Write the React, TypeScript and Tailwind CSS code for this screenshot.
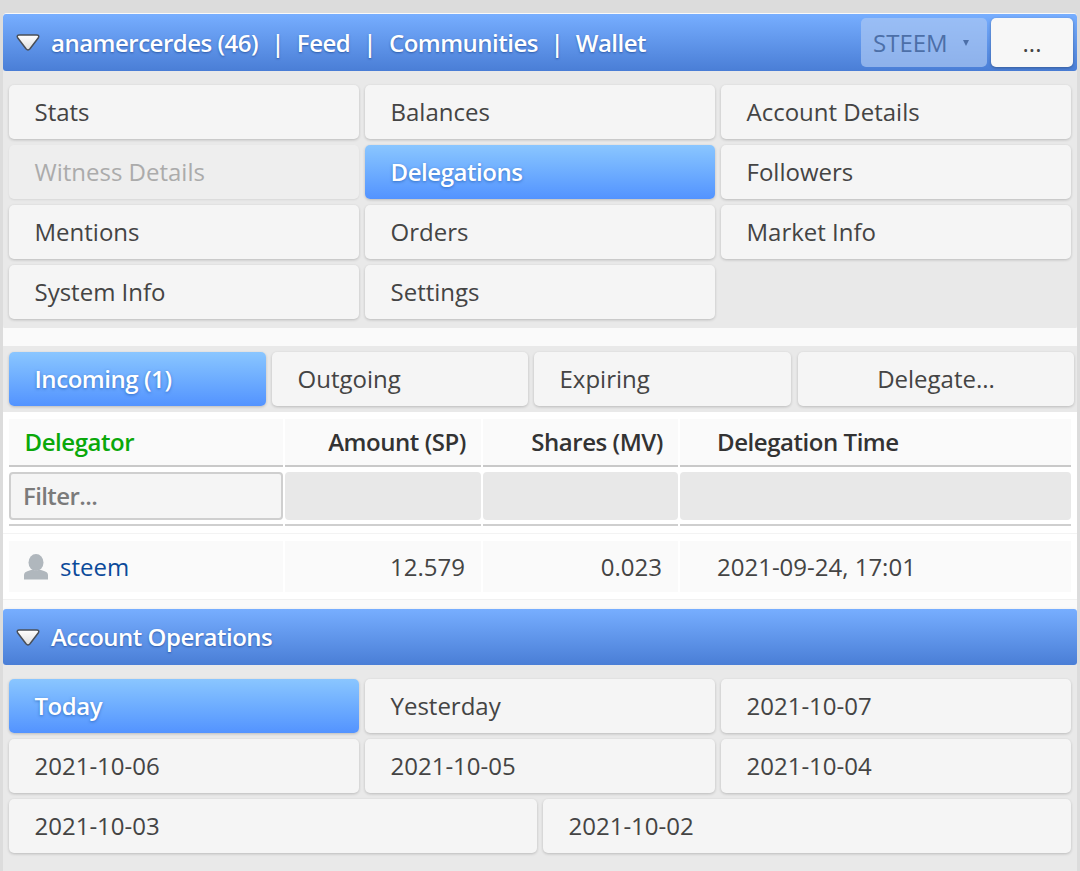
const font = "font-['Open_Sans','Liberation_Sans',sans-serif]";

const menu = ["Stats", "Balances", "Account Details", "Witness Details", "Delegations", "Followers", "Mentions", "Orders", "Market Info", "System Info", "Settings"];
const days = ["Today", "Yesterday", "2021-10-07", "2021-10-06", "2021-10-05", "2021-10-04"];

function Btn({ label, active, disabled, center, className = "" }: { label: string; active?: boolean; disabled?: boolean; center?: boolean; className?: string }) {
  let look = "bg-[#f5f5f5] text-[#444] shadow-[0_1px_3px_rgba(0,0,0,0.2)]";
  if (active) look = "bg-gradient-to-b from-[#8ac6ff] to-[#5393ff] text-white font-semibold tracking-[-0.45px] [text-shadow:0_1px_3px_rgba(0,60,140,0.5)] shadow-[0_1px_3px_rgba(0,0,0,0.2)]";
  if (disabled) look = "bg-[#eeeeee] text-[#ababab] shadow-[0_1px_2px_rgba(0,0,0,0.08)]";
  return (
    <div className={`flex h-[54px] items-center rounded-[5px] px-[25.5px] text-[24px] leading-none ${center ? "justify-center" : ""} ${look} ${className}`}>
      {label}
    </div>
  );
}

function Arrow() {
  return (
    <svg width="26" height="19" viewBox="0 0 26 19" className="shrink-0">
      <defs>
        <linearGradient id="arrowFill" x1="0" y1="0" x2="0" y2="1">
          <stop offset="0" stopColor="#ffffff" />
          <stop offset="1" stopColor="#dedede" />
        </linearGradient>
      </defs>
      <path d="M4.5 2 H21.5 Q25 2 23.2 5 L15 15.8 Q13 18 11 15.8 L2.8 5 Q1 2 4.5 2 Z" fill="url(#arrowFill)" stroke="#4a4f57" strokeWidth="1.5" strokeLinejoin="round" />
    </svg>
  );
}

function BarHeader({ children, className = "h-[57px]" }: { children: React.ReactNode; className?: string }) {
  return (
    <div className={`flex items-center rounded-[3px] bg-gradient-to-b from-[#77aeff] to-[#4a7ed6] pl-[12px] pr-[4px] shadow-[0_2px_4px_rgba(0,0,0,0.2)] ${className}`}>
      <Arrow />
      {children}
    </div>
  );
}

const barText = "font-semibold text-[24px] leading-none tracking-[-0.5px] text-white [text-shadow:0_1px_2px_rgba(0,40,110,0.5)]";

function HeadCell({ children, right, green }: { children: React.ReactNode; right?: boolean; green?: boolean }) {
  return (
    <div className={`flex h-[46px] items-center bg-[#fafafa] text-[24px] font-semibold tracking-[-0.45px] ${right ? "justify-end pr-[15px]" : "pl-[37px]"} ${green ? "!pl-[15.5px] text-[#0aa80a]" : "text-[#333]"}`}>
      {children}
    </div>
  );
}

function BodyCell({ children, right, className = "" }: { children: React.ReactNode; right?: boolean; className?: string }) {
  return (
    <div className={`flex h-[51px] items-center bg-[#fafafa] text-[24px] text-[#444] ${right ? "justify-end pr-[16px]" : "pl-[37px]"} ${className}`}>
      {children}
    </div>
  );
}

const cols = "grid grid-cols-[274px_196px_195px_391px] gap-x-[2px]";

export default function App() {
  return (
    <div className={`${font} h-[871px] w-[1080px] overflow-hidden bg-[#dcdcdc] pl-[3px] pt-[13px]`}>
      <div className="h-[858px] w-[1074px] overflow-hidden rounded-t-[4px] bg-white pt-[1px]">
        <BarHeader>
          <div className={`${barText} ml-[10px] flex flex-1 items-center`}>
            <span>anamercerdes (46)</span>
            <span className="mx-[13px]">|</span>
            <span>Feed</span>
            <span className="mx-[13px]">|</span>
            <span>Communities</span>
            <span className="mx-[12.5px]">|</span>
            <span>Wallet</span>
          </div>
          <div className="flex h-[49px] w-[126px] items-center rounded-[5px] bg-[#a9c6f2]/70 pl-[12px] text-[24px] leading-none text-[#4c6fa8]">
            STEEM
            <span className="ml-[15px] h-0 w-0 border-x-[3.5px] border-t-[6px] border-x-transparent border-t-[#4c6fa8]" />
          </div>
          <div className="ml-[4px] flex h-[49px] w-[82px] items-center justify-center rounded-[5px] bg-[#f7f7f7] text-[24px] leading-none text-[#444] shadow-[0_1px_3px_rgba(0,0,0,0.3)]">
            ...
          </div>
        </BarHeader>

        <div className="h-[257px] rounded-b-[4px] bg-[#e9e9e9] pl-[6px] pt-[14px] shadow-[0_2px_3px_rgba(0,0,0,0.12)]">
          <div className="grid w-[1062px] grid-cols-3 gap-[6px]">
            {menu.map((m) => (
              <Btn key={m} label={m} active={m === "Delegations"} disabled={m === "Witness Details"} />
            ))}
          </div>
        </div>

        <div className="h-[18px] bg-[#fafafa]" />

        <div className="flex h-[66px] gap-[6px] bg-[#e9e9e9] pl-[6px] pt-[6px]">
          <Btn label="Incoming (1)" active className="w-[257px]" />
          <Btn label="Outgoing" className="w-[256px]" />
          <Btn label="Expiring" className="w-[257px]" />
          <Btn label="Delegate..." center className="ml-[1px] w-[276px]" />
        </div>

        <div className="h-[188px] border-b border-[#f1f1f1] bg-white pl-[6px] pt-[7px]">
          <div className={cols}>
            <HeadCell green>Delegator</HeadCell>
            <HeadCell right>Amount (SP)</HeadCell>
            <HeadCell right>Shares (MV)</HeadCell>
            <HeadCell>Delegation Time</HeadCell>
          </div>
          <div className={cols}>
            <div className="h-[2px] bg-[#c9c9c9]" />
            <div className="h-[2px] bg-[#c9c9c9]" />
            <div className="h-[2px] bg-[#c9c9c9]" />
            <div className="h-[2px] bg-[#c9c9c9]" />
          </div>
          <div className={`${cols} mt-[5px]`}>
            <div className="flex h-[48px] items-center rounded-[4px] border-2 border-[#cfcfcf] bg-[#f5f5f5] pl-[12px] text-[24px] font-semibold tracking-[-0.6px] text-[#7b7b7b]">
              Filter...
            </div>
            <div className="h-[48px] rounded-[4px] bg-[#e8e8e8]" />
            <div className="h-[48px] rounded-[4px] bg-[#e8e8e8]" />
            <div className="h-[48px] rounded-[4px] bg-[#e8e8e8]" />
          </div>
          <div className={`${cols} mt-[4px]`}>
            <div className="h-[2px] bg-[#cfcfcf]" />
            <div className="h-[2px] bg-[#cfcfcf]" />
            <div className="h-[2px] bg-[#cfcfcf]" />
            <div className="h-[2px] bg-[#cfcfcf]" />
          </div>
          <div className="-ml-[6px] mt-[7px] h-[1px] bg-[#f3f3f3]" />
          <div className={`${cols} mt-[7px]`}>
            <BodyCell className="!pl-[14px]">
              <svg width="26" height="26" viewBox="0 0 26 26" className="mr-[11px] shrink-0">
                <ellipse cx="13" cy="8.5" rx="7.5" ry="8.5" fill="#b0b7bd" />
                <path d="M1 25.5 V21 Q1 18 5 17 L9.5 15.5 Q13 17.5 16.5 15.5 L21 17 Q25 18 25 21 V25.5 Z" fill="#b0b7bd" />
              </svg>
              <span className="text-[#0b4a9a]">steem</span>
            </BodyCell>
            <BodyCell right>12.579</BodyCell>
            <BodyCell right>0.023</BodyCell>
            <BodyCell>2021-09-24, 17:01</BodyCell>
          </div>
        </div>

        <div className="h-[9px] bg-[#fafafa]" />
        <BarHeader className="h-[56px]">
          <span className={`${barText} ml-[10px]`}>Account Operations</span>
        </BarHeader>

        <div className="h-[207px] bg-[#e9e9e9] pl-[6px] pt-[14px]">
          <div className="grid w-[1062px] grid-cols-3 gap-[6px]">
            {days.map((d) => (
              <Btn key={d} label={d} active={d === "Today"} />
            ))}
          </div>
          <div className="mt-[6px] grid w-[1062px] grid-cols-2 gap-[6px]">
            <Btn label="2021-10-03" />
            <Btn label="2021-10-02" />
          </div>
        </div>
      </div>
    </div>
  );
}
